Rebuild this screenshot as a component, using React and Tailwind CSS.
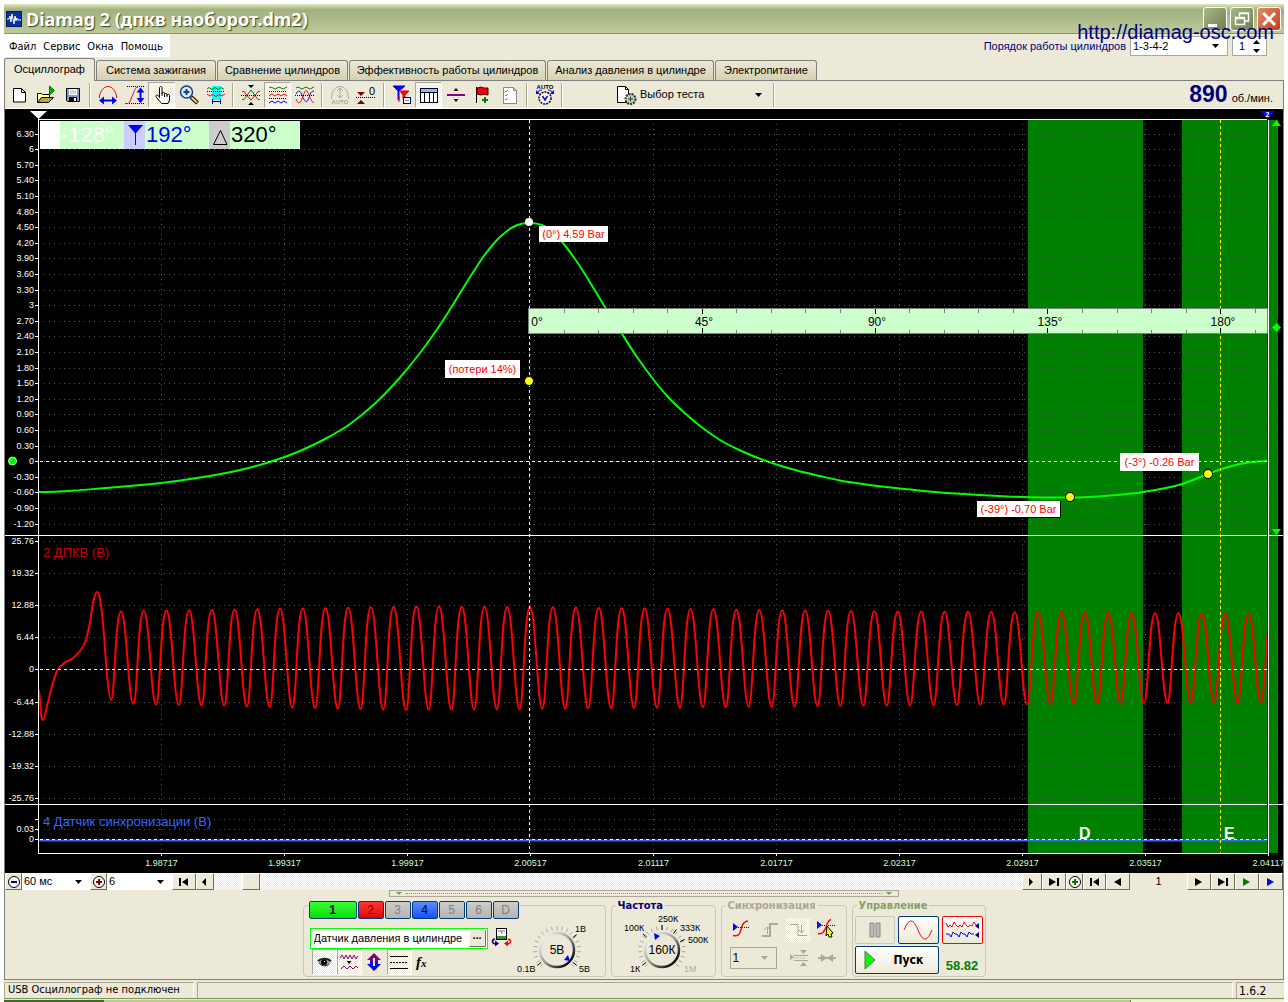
import React from "react";

const RAISED =
  "flex shrink-0 items-center justify-center border border-t-white border-l-white border-r-[#716f64] border-b-[#716f64] bg-[#ece9d8]";
const HATCH = "bg-[repeating-conic-gradient(#ffffff_0%_25%,#ece9d8_0%_50%)] bg-size-[2px_2px]";

/* ---------- toolbar glyphs, all on a 24 x 24 grid ---------- */
const RED = "#ff0000";
const BLUE = "#0000ff";
const GREEN = "#008000";

const GLYPHS = {
  file: (
    <path d="M6.500 5.500h8l4 4v9.500h-12z M14.500 5.500v4h4" fill="#fff" stroke="#000" />
  ),
  open: (
    <>
      <path d="M3.500 19.500v-9h4l1 1h7v3" fill="#ffff99" stroke="#000" />
      <path d="M3.500 19.500l4-5h12l-5 5z" fill="#b5a642" stroke="#000" />
      <path d="M15.500 3v9l5-4.500z" fill="#00b000" stroke="#008000" />
    </>
  ),
  save: (
    <>
      <path d="M5.500 5.500h13v13h-12l-1-1z" fill="#8a9cc4" stroke="#000" />
      <rect x="8" y="6" width="8" height="6" fill="#fff" />
      <rect x="8" y="14" width="8" height="4" fill="#000" />
      <rect x="13" y="15" width="2" height="3" fill="#fff" />
      <path d="M9 8h6M9 10h6" stroke="#aaa" />
    </>
  ),
  period: (
    <>
      <path d="M3.500 15v-2c1-5 4-9.500 8.500-9.500s7.500 4.500 8.500 9.500v2" fill="none" stroke={RED} />
      <path d="M6 17.500h12" stroke={BLUE} strokeWidth="2" />
      <path d="M3 17.500l5-4v8zM21 17.500l-5-4v8z" fill={BLUE} />
    </>
  ),
  amplitude: (
    <>
      <path d="M4 3.500h17M4 20.500h17" stroke="#000" strokeDasharray="1 1" />
      <path d="M2 20.500h3c3-2 3-6 5-9c1.500-4 2-7 5-7.500" fill="none" stroke={RED} />
      <path d="M17.500 6v13" stroke={BLUE} strokeWidth="2" />
      <path d="M17.500 4.500l4 5h-8zM17.500 20l4-5h-8z" fill={BLUE} />
    </>
  ),
  hand: (
    <path
      d="M9.500 14.500v-9.500c0-2 2.500-2 2.500 0v5.500c0-1.500 2.500-1.500 2.500 0v1c0-1.500 2.500-1.500 2.500 0v1c0-1.500 2.500-1.500 2.500 0v4.500l-1.500 3.500h-6.500l-5-6c-1.500-2 .5-3 2-2zM12 10v3M14.500 11v3M17 12v2"
      fill="#fff"
      stroke="#000"
    />
  ),
  zoom: (
    <>
      <path d="M14 14l6.500 6" stroke="#000" strokeWidth="4" />
      <path d="M14.500 14.500l5.500 5" stroke="#ffd75e" strokeWidth="2" />
      <circle cx="9.500" cy="9" r="6" fill="#d6ecff" stroke="#1d3b8c" strokeWidth="1.500" />
      <path d="M6.500 9h6M9.500 6v6" stroke="#1d3b8c" strokeWidth="2" />
    </>
  ),
  range: (
    <>
      <rect x="8" y="3" width="9" height="14" fill="#00ffff" />
      <path d="M3 6l2-1.500 3 2 3-2 3 2 3-2 3 2" fill="none" stroke={GREEN} />
      <path d="M3 8.500h18" stroke="#000" strokeDasharray="1 1" />
      <path d="M3 11l3 2 3-1.500 3 2 3-2 3 1.500 3-2" fill="none" stroke={RED} />
      <path d="M8.500 16v5M16.500 16v5M8 18.500h9" stroke="#000080" />
    </>
  ),
  autoscale: (
    <>
      <path d="M3 16.500h2l3-4 4-5.500 4 5.500 3 4h2" fill="none" stroke={GREEN} />
      <path d="M3 8.500h2l3 4 4 4.500 4-4.500 3-4h2" fill="none" stroke={RED} />
      <path d="M2 12.500h20" stroke="#000" strokeDasharray="1 1" />
      <path d="M9 2h6l-3 3zM9 22h6l-3-3z" fill="#000" />
    </>
  ),
  split: (
    <>
      <path d="M3 5l2-1 4 2 4-2 4 2 4-2" fill="none" stroke={GREEN} />
      <path d="M3 8.500h18M3 15.500h18" stroke="#000" strokeDasharray="1 1" />
      <path d="M3 13l3-2 3 2 3-2 3 2 3-2 3 2" fill="none" stroke={RED} />
      <path d="M3 20l3-2 3 2 3-2 3 2 3-2 3 2" fill="none" stroke={BLUE} />
    </>
  ),
  overlay: (
    <>
      <path d="M3 5l2-1 4 2 4-2 4 2 4-2" fill="none" stroke={GREEN} />
      <path d="M3 11c2-4 4-4 6 1s4 9 6 5 2-9 6-9" fill="none" stroke={BLUE} />
      <path d="M3 16c2 5 4 5 6 0s3-10 5-8 3 10 7 12" fill="none" stroke={RED} />
      <path d="M2 12.500h20" stroke="#000" strokeDasharray="1 1" />
    </>
  ),
  autoGray: (
    <>
      <path d="M3.500 16c0-7 3-12.500 8.500-12.500s8.500 5.500 8.500 12.500" fill="none" stroke="#aca899" />
      <path d="M12 5v10M9 8l3-3 3 3M9 12l3 3 3-3" fill="none" stroke="#aca899" />
      <text x="12" y="21" fontSize="6" fontWeight="bold" textAnchor="middle" fill="#aca899">AUTO</text>
    </>
  ),
  zero: (
    <>
      <path d="M2 9h8l-4 4zM2 21h8l-4-4z" fill="#800000" />
      <path d="M1 14.500h19" stroke="#000" strokeDasharray="1 1" />
      <text x="14" y="12" fontSize="11" fill="#000">0</text>
    </>
  ),
  filter: (
    <>
      <path d="M3 3h12l-6 5v9h-1V8z" fill={BLUE} stroke={BLUE} />
      <path d="M10 8h9l-4 4v4h-2v-4z" fill={RED} stroke={RED} />
      <path d="M9 13v6" stroke={RED} />
      <rect x="13.500" y="14.500" width="7" height="6" fill="#fff" stroke="#000080" />
      <path d="M15 17.500h4" stroke="#888" />
    </>
  ),
  table: (
    <>
      <rect x="3.500" y="5.500" width="17" height="14" fill="#fff" stroke="#000" />
      <rect x="4" y="6" width="16" height="3" fill="#8fb8ff" />
      <path d="M3 9.500h18M7.500 9v10M12.500 9v10M16.500 9v10" stroke="#000" />
    </>
  ),
  level: (
    <>
      <path d="M3 12h18" stroke="#800080" strokeWidth="2" />
      <path d="M9.500 8h5l-2.500-3zM9.500 16h5l-2.500 3z" fill="#000" />
    </>
  ),
  flag: (
    <>
      <path d="M5.500 4v16" stroke="#000" />
      <path d="M6 5l4-1 3 1 4 0v7l-4-1-3 1-4-1z" fill={RED} stroke="#400" />
      <path d="M11 17h6M14 14v6" stroke={GREEN} strokeWidth="2" />
    </>
  ),
  checklist: (
    <>
      <path d="M5.500 4.500h10l3 3v13h-13zM15.500 4.500v3h3" fill="#fff" stroke="#888" />
      <path d="M7 8l1 1 2-2M7 12l1 1 2-2M7 16l1 1 2-2" fill="none" stroke="#888" />
    </>
  ),
  autoDial: (
    <>
      <text x="12" y="6" fontSize="6" fontWeight="bold" textAnchor="middle" fill="#000">AUTO</text>
      <circle cx="12" cy="15" r="6" fill="#fff" stroke="#000" strokeWidth="1.500" strokeDasharray="2 1" />
      <path d="M9.500 13l2.500 4 2.500-4" fill="none" stroke={BLUE} strokeWidth="1.500" />
      <path d="M4 10c1-2 3-3 5-3M20 10c-1-2-3-3-5-3" fill="none" stroke={BLUE} />
      <path d="M3 7v4h4zM21 7v4h-4z" fill={BLUE} />
    </>
  ),
  test: (
    <>
      <path d="M3.500 3.500h8l3 3v13h-11zM11.500 3.500v3h3" fill="#fff" stroke="#000" />
      <circle cx="16.500" cy="16" r="5" fill="#b9d8b9" stroke="#333" strokeWidth="2" strokeDasharray="2 1" />
      <path d="M14 16h5M16.500 13.500v5" stroke="#333" />
    </>
  ),
  eye: (
    <>
      <path d="M6 12c3-4 10-4 13 0l-3 4c-3 1-6 0-10-4z" fill="#a89c90" />
      <path d="M6 11c3-3 9-3 13 0" fill="none" stroke="#222" strokeWidth="2" />
      <path d="M7 13c2 3 7 4 10 1" fill="none" stroke="#444" />
      <circle cx="12" cy="12.500" r="3" fill="#000" />
      <rect x="12" y="11" width="1" height="1" fill="#fff" />
    </>
  ),
  smooth: (
    <>
      <path d="M3 8l2-3 2 4 2-4 2 4 2-4 2 4 2-4 2 4 2-3" fill="none" stroke="#800080" />
      <path d="M9.500 11h5l-2.500 3z" fill="#000" />
      <path d="M4 19l3-3 3 3 3-3 3 3 3-3 2 2" fill="none" stroke="#800080" />
    </>
  ),
  vertical: (
    <>
      <path d="M12 3l7 7h-3v2H8v-2H5z" fill="#800080" />
      <path d="M12 21l7-7h-3v-2H8v2H5z" fill={BLUE} />
      <path d="M12 8v8" stroke="#ece9d8" strokeWidth="2" />
    </>
  ),
  lines: (
    <>
      <path d="M3 6.500h18M3 18.500h18" stroke="#000" />
      <path d="M3 12.500h18" stroke="#000" strokeDasharray="2 1" />
    </>
  ),
  fx: (
    <text x="4" y="17" fontSize="15" fontStyle="italic" fontWeight="bold" fontFamily="Liberation Serif, serif">
      f<tspan fontSize="11">x</tspan>
    </text>
  ),
  probe: (
    <>
      <rect x="6.500" y="2.500" width="10" height="11" fill="#fff" stroke="#000" />
      <rect x="7" y="10" width="9" height="3" fill="#3a8c3a" />
      <path d="M8 5h7M11 5l1 3" stroke="#777" />
      <path d="M5 13c-4 1-3 5 1 5" fill="none" stroke="#000080" strokeWidth="1.500" />
      <path d="M5 14.500v6l4-3z" fill="#000080" />
      <path d="M18 13c4 1 3 5-1 5" fill="none" stroke={RED} strokeWidth="1.500" />
      <path d="M18 14.500v6l-4-3z" fill={RED} />
    </>
  ),
  syncLevel: (
    <>
      <path d="M3 5v8l5-4z" fill={BLUE} />
      <path d="M8 9.500h12" stroke={BLUE} strokeDasharray="1 1" />
      <path d="M3 17.500c8 2 7-5 9-9 1-4 3-5 6-5.500" fill="none" stroke={RED} strokeWidth="1.500" />
    </>
  ),
  rise: (
    <g stroke="#aca899" fill="none">
      <path d="M4 18h8V6h8" strokeWidth="2" />
      <path d="M9.500 16V9M6 12l3.500-3 3 3" />
    </g>
  ),
  fall: (
    <g stroke="#aca899" fill="none">
      <path d="M4 6.500h8v11h9" />
      <path d="M15.500 7v8M13 12l2.500 3 2.500-3" />
    </g>
  ),
  syncPick: (
    <>
      <path d="M3 3v8l5-4z" fill={BLUE} />
      <path d="M8 7.500h13" stroke={BLUE} strokeDasharray="1 1" />
      <path d="M4 15.500c6 1 6-3 8-6 1-4 2-7 5-8" fill="none" stroke={RED} strokeWidth="1.500" />
      <path d="M13 8l6 7-2 1 1 3-3 0-1-3-2 2z" fill="#ffff00" stroke="#000" />
    </>
  ),
  spread: (
    <>
      <path d="M3 8v6l4-3zM13 4h7l-3.500 4zM13 20h7l-3.500-4z" fill="#aca899" />
      <path d="M7 9.500h14M7 14.500h14" stroke="#aca899" />
      <path d="M7 12h12" stroke="#aca899" strokeDasharray="1 1" />
    </>
  ),
  squeeze: (
    <>
      <path d="M3 12h18" stroke="#aca899" strokeWidth="2" />
      <path d="M6 8v8l6-4zM18 8v8l-6-4z" fill="#aca899" />
    </>
  ),
};

function Glyph({ name }) {
  return (
    <svg viewBox="0 0 24 24" className="size-6 shrink-0 font-['Liberation_Sans',sans-serif]" aria-hidden="true">
      {GLYPHS[name]}
    </svg>
  );
}

function ToolButton({ name, label, pressed, width = "w-[27px]" }) {
  return (
    <button
      type="button"
      aria-label={label}
      className={`flex h-[26px] shrink-0 items-center justify-center overflow-hidden ${width} ${
        pressed ? `border border-t-[#aca899] border-l-[#aca899] border-r-white border-b-white ${HATCH}` : ""
      }`}
    >
      <Glyph name={name} />
    </button>
  );
}

function Separator() {
  return (
    <div className="flex w-2 shrink-0 justify-center">
      <div className="h-6 w-0.5 border-r border-l border-l-[#aca899] border-r-white" />
    </div>
  );
}

const TOOL_GROUPS = [
  [["file", "Новый"], ["open", "Открыть"], ["save", "Сохранить"]],
  [["period", "Период"], ["amplitude", "Амплитуда"], ["hand", "Перемещение", true], ["zoom", "Увеличить"], ["range", "Диапазон"]],
  [["autoscale", "Масштаб"], ["split", "Раздельно", true], ["overlay", "Совместно"]],
  [["autoGray", "Авто"], ["zero", "Ноль"]],
  [["filter", "Фильтр"], ["table", "Таблица", true], ["level", "Уровень"], ["flag", "Метка"], ["checklist", "Список"]],
  [["autoDial", "Автонастройка"]],
];

/* ---------- small pieces ---------- */
function Picker({ label, value, className }) {
  return (
    <div className={`relative flex items-center ${className}`}>
      <select aria-label={label} className="h-full w-full appearance-none bg-transparent pl-0.5 outline-none" defaultValue={value}>
        <option>{value}</option>
      </select>
      <svg viewBox="0 0 7 4" className="pointer-events-none absolute right-2 h-1 w-[7px]" aria-hidden="true">
        <path d="M0 0h7l-3.500 4z" fill="currentColor" />
      </svg>
    </div>
  );
}

const ARROWS = {
  first: "M2 2h2v8h-2zM11 2v8l-6-4z",
  last: "M10 2h2v8h-2zM2 2v8l7-4z",
  prev: "M8 2v8l-4-4z",
  next: "M4 2v8l4-4z",
  prevWide: "M10 2v8l-7-4z",
  nextWide: "M3 2v8l7-4z",
};

function NavButton({ arrow, label, className }) {
  return (
    <button type="button" aria-label={label} className={`${RAISED} h-[17px] ${className}`}>
      <svg viewBox="0 0 14 12" className="h-3 w-[14px]" aria-hidden="true">
        <path d={ARROWS[arrow]} fill="currentColor" />
      </svg>
    </button>
  );
}

function RoundButton({ label, minus, className }) {
  return (
    <button type="button" aria-label={label} className={`${RAISED} h-[17px] w-[17px] ${className}`}>
      <svg viewBox="0 0 14 14" className="size-[14px]" aria-hidden="true">
        <circle cx="7" cy="7" r="5.500" fill="#fff" stroke="#000" />
        <path d={minus ? "M4 7h6" : "M4 7h6M7 4v6"} stroke="currentColor" strokeWidth="2" />
      </svg>
    </button>
  );
}

/* ---------- oscillogram ---------- */
const PRESSURE = [
  [39, 492], [75, 490.5], [100, 488.5], [130, 486], [161, 483], [200, 477.5], [240, 470], [273, 461], [300, 451],
  [324, 439.5], [350, 424], [375, 403.5], [400, 377.5], [420, 353], [442, 322], [472, 274], [485, 254.5],
  [500, 237], [514, 226.5], [529, 223], [545, 226.5], [563, 243], [575, 259],
  [605, 307], [622, 334], [637, 357], [653, 379], [668, 397], [687, 415], [702, 427.5], [720, 440],
  [737, 449], [753, 456], [778, 465], [797, 470.5], [820, 476], [840, 480.5], [870, 485], [900, 488.5], [940, 492.5],
  [980, 495], [1022, 497], [1070, 497.5], [1110, 495.5], [1143, 492], [1182, 484], [1208, 474],
  [1220, 469.5], [1240, 464], [1267, 461],
];
const START = [
  [39, 690], [41, 714], [43, 720], [47, 706], [52, 686], [57, 671], [63, 664], [73, 658],
  [80, 651], [86, 640], [90, 622], [93, 603], [97, 592], [101, 605], [104, 635], [107, 675], [111, 700],
];

/* Cubic Hermite curve whose tangents allow for uneven spacing of the samples. */
function smoothPath(points) {
  const slope = (a, b) => (b[1] - a[1]) / (b[0] - a[0]);
  const tangents = points.map((p, i) => {
    const a = points[i - 1];
    const c = points[i + 1];
    if (!a || !c) return 0;
    const s0 = slope(a, p);
    const s1 = slope(p, c);
    if (s0 * s1 <= 0) return 0;
    const h0 = p[0] - a[0];
    const h1 = c[0] - p[0];
    return (s0 * h1 + s1 * h0) / (h0 + h1);
  });
  let d = `M${points[0][0]} ${points[0][1]}`;
  for (let i = 0; i < points.length - 1; i++) {
    const b = points[i];
    const c = points[i + 1];
    const h = (c[0] - b[0]) / 3;
    d += `C${b[0] + h} ${b[1] + h * tangents[i]} ${c[0] - h} ${c[1] - h * tangents[i + 1]} ${c[0]} ${c[1]}`;
  }
  return d;
}

function mix(x, stops) {
  for (let i = 0; i < stops.length - 1; i++) {
    const [x0, y0] = stops[i];
    const [x1, y1] = stops[i + 1];
    if (x <= x1) return y0 + ((x - x0) / (x1 - x0)) * (y1 - y0);
  }
  return stops[stops.length - 1][1];
}

function crankPath() {
  const peaks = [];
  for (let i = 0; i < 18; i++) peaks.push(121 + 22.72 * i);
  for (let i = 0; i < 14; i++) peaks.push(530 + 22.93 * i);
  for (let i = 0; i < 19; i++) peaks.push(851 + 23.39 * i);
  const top = [[121, 611.5], [416, 606.5], [530, 607], [840, 611], [1280, 614]];
  const low = [[111, 700], [133, 704], [400, 710], [530, 709], [840, 706], [1280, 702]];
  let d = smoothPath(START);
  let trough = 111;
  for (const p of peaks) {
    const y = mix(p, top);
    d += `C${trough + 4} ${mix(trough, low)} ${p - 6} ${y} ${p} ${y}`;
    trough = p + 12.4;
    const yl = mix(trough, low);
    d += `C${p + 5.5} ${y} ${trough - 5} ${yl} ${trough} ${yl}`;
  }
  return d;
}

const P_LABELS = [
  "6.30", "6", "5.70", "5.40", "5.10", "4.80", "4.50", "4.20", "3.90", "3.60", "3.30", "3", "2.70", "2.40", "2.10",
  "1.80", "1.50", "1.20", "0.90", "0.60", "0.30", "0", "-0.30", "-0.60", "-0.90", "-1.20",
].map((t, i) => [t, Math.round(133.5 + i * 15.6)]);
const V_LABELS = ["25.76", "19.32", "12.88", "6.44", "0", "-6.44", "-12.88", "-19.32", "-25.76"].map((t, i) => [
  t,
  Math.round(541 + i * 32.1),
]);
const S_LABELS = [["", 819], ["0.03", 829], ["0", 839]];
const Y_LABELS = [...P_LABELS, ...V_LABELS, ...S_LABELS];
const T_LABELS = ["1.98717", "1.99317", "1.99917", "2.00517", "2.01117", "2.01717", "2.02317", "2.02917", "2.03517", "2.04117"];

function Tag({ x, y, w, h, text, shadow }) {
  return (
    <g>
      {shadow && <rect x={x} y={y} width={w + 1} height={h + 1} fill="#000" />}
      <rect x={x} y={y} width={w} height={h} fill="#fff" />
      <text x={x + w / 2} y={y + h / 2 + 4} textAnchor="middle" fontSize="11" fill="#ff0000">{text}</text>
    </g>
  );
}

function Oscillogram() {
  return (
    <svg
      viewBox="5 109 1278 764"
      className="block h-auto w-full bg-black font-['Liberation_Sans',Arial,sans-serif]"
      role="img"
      aria-label="Осциллограмма"
    >
      <g fill="#008000">
        <rect x="1028" y="120" width="115" height="733" />
        <rect x="1182" y="120" width="85" height="733" />
        <rect x="1269" y="120" width="9" height="733" />
      </g>
      <g stroke="#555555" strokeDasharray="1 4" shapeRendering="crispEdges">
        {Y_LABELS.map(([, y]) => (
          <path key={y} d={`M44 ${y + 0.5}H1266`} />
        ))}
        {T_LABELS.slice(0, 9).map((t, i) => (
          <path key={t} d={`M${161.5 + i * 123} 124V853`} />
        ))}
      </g>
      <g fontSize="9" fill="#fff">
        {Y_LABELS.map(([t, y]) => (
          <text key={y} x="34" y={y + 3} textAnchor="end">{t}</text>
        ))}
        {T_LABELS.map((t, i) => (
          <text key={t} x={161.5 + i * 123} y="866" textAnchor="middle" fill="#ccffcc">{t}</text>
        ))}
      </g>
      <g stroke="#fff" shapeRendering="crispEdges">
        {Y_LABELS.map(([, y]) => (
          <path key={y} d={`M35 ${y + 0.5}h4`} />
        ))}
        {T_LABELS.map((t, i) => (
          <path key={t} d={`M${161.5 + i * 123} 853v3`} />
        ))}
      </g>
      <path d={smoothPath(PRESSURE)} fill="none" stroke="#00ff00" strokeWidth="2" />
      <path d={crankPath()} fill="none" stroke="#ff0000" strokeWidth="2" clipPath="url(#plot)" />
      <clipPath id="plot">
        <rect x="38" y="540" width="1229" height="260" />
      </clipPath>
      <path d="M39 840.500H1267" stroke="#3366ff" strokeWidth="2" />
      <g stroke="#fff" strokeDasharray="3 3" shapeRendering="crispEdges">
        <path d="M40 461.500H1267M40 669.500H1267M40 839.500H1267" />
      </g>
      <path d="M529.500 120V853" stroke="#ffff66" strokeDasharray="3 3" shapeRendering="crispEdges" />
      <path d="M1220.500 120V853" stroke="#ffff00" strokeDasharray="3 3" shapeRendering="crispEdges" />
      <g stroke="#fff" shapeRendering="crispEdges">
        <path d="M38 119.500H1268M5 535.500H1283M5 804.500H1283M38 853.500H1268M38.500 119V854M1268.500 120V853" />
        <path d="M1267.500 119V853" stroke="#0000ff" />
      </g>

      <g shapeRendering="crispEdges">
        <rect x="528.500" y="308.500" width="739" height="25" fill="#ccffcc" stroke="#808080" />
        {Array.from({ length: 21 }, (_, i) => i + 1).map((i) => {
          const x = Math.round(529 + i * 34.56) + 0.5;
          return i % 5 === 0 ? (
            <path key={i} d={`M${x} 309v5M${x} 328v5`} stroke="#000" />
          ) : (
            <path key={i} d={`M${x} 309v4M${x} 330v3`} stroke="#808080" />
          );
        })}
      </g>
      <g fontSize="12" fill="#000" textAnchor="middle">
        <text x="537" y="326">0°</text>
        <text x="704" y="326">45°</text>
        <text x="877" y="326">90°</text>
        <text x="1050" y="326">135°</text>
        <text x="1223" y="326">180°</text>
      </g>

      <Tag x={539} y={226} w={69} h={16} text="(0°) 4.59 Bar" />
      <Tag x={445} y={360} w={75} h={18} text="(потери 14%)" />
      <Tag x={977} y={501} w={83} h={16} text="(-39°) -0.70 Bar" shadow />
      <Tag x={1120} y={453} w={79} h={18} text="(-3°) -0.26 Bar" />
      <circle cx="529" cy="222" r="4" fill="#fff" />
      <g fill="#ffff00" stroke="#000">
        <circle cx="529" cy="381" r="4.500" />
        <circle cx="1070" cy="497" r="4.500" />
        <circle cx="1208" cy="474" r="4.500" />
      </g>
      <circle cx="12.500" cy="461" r="4" fill="#00ff00" stroke="#b0ffb0" />

      <path d="M30 111h17l-8.500 8z" fill="#fff" />
      <path d="M1260 111h15l-7.500 8z" fill="#0000ff" />
      <text x="1267.500" y="117" fontSize="7" fontWeight="bold" textAnchor="middle" fill="#fff">2</text>
      <g fill="#00ff00">
        <path d="M1272 126h9l-4.500-6zM1272 529h9l-4.500 6zM1276.500 323l4.500 4.500-4.500 4.500-4.500-4.500z" />
      </g>

      <rect x="40" y="121" width="260" height="28" fill="#ccffcc" />
      <rect x="40" y="121" width="20" height="28" fill="#fff" />
      <rect x="124" y="121" width="21" height="28" fill="#ccccff" />
      <rect x="209" y="121" width="21" height="28" fill="#cccccc" />
      <path d="M128 125h15l-7 8v12h-1v-12z" fill="#0000ff" />
      <path d="M220.500 130.500l6.500 14h-13.500z" fill="none" stroke="#000" />
      <g fontSize="22">
        <text x="61" y="142" fill="#fff">-128°</text>
        <text x="146" y="142" fill="#0000ff">192°</text>
        <text x="231" y="142" fill="#000">320°</text>
      </g>
      <g fontSize="13">
        <text x="43" y="557" fill="#cc0000">2 ДПКВ (В)</text>
        <text x="43" y="826" fill="#3366ff">4 Датчик синхронизации (В)</text>
      </g>
      <g fontSize="16" fontWeight="bold" fill="#fff">
        <text x="1079" y="839">D</text>
        <text x="1224" y="839">E</text>
      </g>
    </svg>
  );
}

/* ---------- knobs ---------- */
function Knob({ value, marks, pointer, active }) {
  const ticks = Array.from({ length: 21 }, (_, i) => 135 + i * 13.5);
  return (
    <svg viewBox="0 0 100 66" className="h-[66px] w-[100px] shrink-0 font-['Liberation_Sans',Arial,sans-serif]" role="img" aria-label={value}>
      <defs>
        <linearGradient id={`ring-${value}`} x1="0.100" y1="0.100" x2="0.900" y2="0.900">
          <stop offset="0" stopColor="#f4f4f4" />
          <stop offset="0.500" stopColor="#999" />
          <stop offset="1" stopColor="#000" />
        </linearGradient>
      </defs>
      <g stroke="#aca899">
        {ticks.map((a) => {
          const r = (a * Math.PI) / 180;
          return (
            <path key={a} d={`M${50 + 20 * Math.cos(r)} ${40 + 20 * Math.sin(r)}L${50 + 24 * Math.cos(r)} ${40 + 24 * Math.sin(r)}`} />
          );
        })}
      </g>
      <g stroke="#000">
        {active.map((a) => {
          const r = (a * Math.PI) / 180;
          return (
            <path key={a} d={`M${50 + 20 * Math.cos(r)} ${40 + 20 * Math.sin(r)}L${50 + 25 * Math.cos(r)} ${40 + 25 * Math.sin(r)}`} />
          );
        })}
      </g>
      <circle cx="50" cy="40" r="17" fill="#ece9d8" stroke={`url(#ring-${value})`} strokeWidth="2.500" />
      <path d={pointer} fill={BLUE} />
      <text x="50" y="44" fontSize="12" textAnchor="middle">{value}</text>
      <g fontSize="9">
        {marks.map(([t, x, y, dim]) => (
          <text key={t} x={x} y={y} fill={dim ? "#aca899" : "#000"}>{t}</text>
        ))}
      </g>
    </svg>
  );
}

const CHANNELS = [
  ["1", "w-12 bg-linear-to-b from-[#33ff33] to-[#00dd00] font-bold text-black"],
  ["2", "w-[26px] bg-linear-to-b from-[#ff3333] to-[#dd0000] text-[#800000]"],
  ["3", "w-[26px] bg-linear-to-b from-[#cccccc] to-[#b4b4b4] text-[#808080]"],
  ["4", "w-[26px] bg-linear-to-b from-[#5c8cff] to-[#1a4cff] text-black"],
  ["5", "w-[26px] bg-linear-to-b from-[#cccccc] to-[#b4b4b4] text-[#808080]"],
  ["6", "w-[26px] bg-linear-to-b from-[#cccccc] to-[#b4b4b4] text-[#808080]"],
  ["D", "w-[26px] bg-linear-to-b from-[#cccccc] to-[#b4b4b4] text-[#808080]"],
];

function Group({ title, titleClass, className, children }) {
  return (
    <section className={`relative h-[72px] shrink-0 rounded-[4px] border border-[#cbc7b8] ${className}`}>
      {title && (
        <h2 className={`absolute -top-2 left-1 bg-[#ece9d8] px-0.5 text-[11px]/4 font-bold font-['DejaVu_Sans_Condensed','DejaVu_Sans',sans-serif] ${titleClass}`}>{title}</h2>
      )}
      {children}
    </section>
  );
}

const TABS = [
  ["Осциллограф", "w-[91px]"],
  ["Система зажигания", "w-[120px]"],
  ["Сравнение цилиндров", "w-[131px]"],
  ["Эффективность работы цилиндров", "w-[197px]"],
  ["Анализ давления в цилиндре", "w-[167px]"],
  ["Электропитание", "w-[102px]"],
];

const XP_BUTTON = "flex items-center justify-center rounded-[2px] border";

export default function App() {
  return (
    <div className="flex min-h-[1002px] w-full flex-col bg-white px-1 pt-1 font-['Liberation_Sans',Arial,sans-serif] text-[11px] text-black">
      <header className="flex h-[30px] items-center border-b border-[#8a9868] bg-linear-to-b from-[#dfe8bd] via-[#a1b07e] via-20% to-[#bccb98] pr-[3px] pl-0.5">
        <svg viewBox="0 0 16 16" className="mr-1 size-4" aria-hidden="true">
          <rect width="16" height="16" fill="#0a2fa0" />
          <rect x="0.500" y="0.500" width="15" height="15" fill="none" stroke="#001a66" />
          <path d="M1 8h2l1-3 1 6 1-8 2 10 1-8 1 5 1-3 1 2h3" fill="none" stroke="#fff" />
        </svg>
        <h1 className="flex-1 font-['Noto_Sans',sans-serif] text-[18px]/7 font-bold text-white [text-shadow:1px_1px_1px_#3a4420]">
          Diamag 2 (дпкв наоборот.dm2)
        </h1>
        <div className="flex gap-[3px]">
          <button type="button" aria-label="Свернуть" className="size-6 rounded-[3px] border border-white bg-linear-to-br from-[#a9b78a] to-[#6e7f4c]">
            <svg viewBox="0 0 22 22" aria-hidden="true"><path d="M4 16h9v3H4z" fill="#fff" /></svg>
          </button>
          <button type="button" aria-label="Развернуть" className="size-6 rounded-[3px] border border-white bg-linear-to-br from-[#a9b78a] to-[#6e7f4c]">
            <svg viewBox="0 0 22 22" aria-hidden="true"><path d="M8.500 9V5h9v8h-4M8 5.500h10M4.500 9.500h9v7h-9zM4 10.500h10" fill="none" stroke="#fff" strokeWidth="1.500" /></svg>
          </button>
          <button type="button" aria-label="Закрыть" className="size-6 rounded-[3px] border border-white bg-linear-to-br from-[#e08a6c] to-[#c43c14]">
            <svg viewBox="0 0 22 22" aria-hidden="true"><path d="M5 5l12 12M17 5l-12 12" stroke="#fff" strokeWidth="3" /></svg>
          </button>
        </div>
      </header>

      <div className="relative flex h-6 items-start justify-between bg-[#ece9d8]">
        <nav className="flex h-[23px] w-[166px] items-center gap-[7px] bg-white pt-1 pl-[5px] font-['DejaVu_Sans_Condensed','DejaVu_Sans',sans-serif]">
          {["Файл", "Сервис", "Окна", "Помощь"].map((t) => (
            <button type="button" key={t}>{t}</button>
          ))}
        </nav>
        <div className="flex items-center pt-0.5 pr-[17px]">
          <label htmlFor="order" className="mr-1 text-[#000080]">Порядок работы цилиндров</label>
          <div className="relative mr-1 flex h-5 w-[98px] items-center border border-[#aca899] bg-white">
            <select id="order" className="h-full w-full appearance-none pl-0.5 outline-none" defaultValue="1-3-4-2">
              <option>1-3-4-2</option>
            </select>
            <svg viewBox="0 0 7 4" className="pointer-events-none absolute right-2 h-1 w-[7px]" aria-hidden="true"><path d="M0 0h7l-3.500 4z" /></svg>
          </div>
          <div className="flex h-5 w-[35px] items-center border border-[#aca899] bg-white pr-1.5">
            <input aria-label="Цилиндр" defaultValue="1" className="w-full min-w-0 pl-1.5 outline-none" />
            <svg viewBox="0 0 7 13" className="h-[13px] w-[7px] shrink-0" aria-hidden="true"><path d="M0 4h7l-3.500-4zM0 9h7l-3.500 4z" /></svg>
          </div>
        </div>
        <a href="#site" className="absolute -top-[14px] right-2.5 text-[20px]/6 text-[#000080]">http://diamag-osc.com</a>
      </div>

      <div role="tablist" className="flex h-[23px] items-end gap-px border-b border-[#808080] bg-[#ece9d8]">
        {TABS.map(([t, w], i) => (
          <button
            type="button"
            role="tab"
            key={t}
            aria-selected={i === 0}
            className={
              i === 0
                ? `-mb-px h-[23px] rounded-t-[3px] border border-b-0 border-[#808080] bg-[#ece9d8] pb-0.5 whitespace-nowrap ${w}`
                : `h-5 rounded-t-[3px] border border-b-0 border-[#808080] bg-linear-to-b from-[#ece9d8] to-[#d6d0b0] whitespace-nowrap ${w}`
            }
          >
            {t}
          </button>
        ))}
      </div>

      <div className="flex-1 border-r border-b border-l border-[#808080] bg-[#ece9d8]">
        <div className="flex h-7 items-center border-b border-white">
          {TOOL_GROUPS.map((g, i) => (
            <React.Fragment key={i}>
              {g.map(([name, label, pressed]) => (
                <ToolButton key={name} name={name} label={label} pressed={pressed} />
              ))}
              <Separator />
            </React.Fragment>
          ))}
          <div className="ml-12 flex items-center">
            <Glyph name="test" />
            <Picker label="Тест" value="Выбор теста" className="h-5 w-[132px]" />
          </div>
          <Separator />
          <div className="ml-auto flex items-baseline gap-1 pr-2.5 text-[#000080]">
            <span className="text-[23px]/6 font-bold">890</span>
            <span className="text-black">об./мин.</span>
          </div>
        </div>

        <Oscillogram />

        <div className="flex h-[17px] items-center">
          <RoundButton label="Уменьшить" minus className="text-[#000080]" />
          <Picker label="Развёртка" value="60  мс" className="h-[17px] w-[68px] bg-white [&>select]:whitespace-pre" />
          <RoundButton label="Увеличить" className="text-[#800000]" />
          <Picker label="Число" value="6" className="h-[17px] w-[65px] bg-white" />
          <NavButton arrow="first" label="В начало" className="w-6" />
          <NavButton arrow="prev" label="Назад" className="w-[18px]" />
          <input
            type="range"
            aria-label="Позиция"
            min="0"
            max="1000"
            defaultValue="35"
            className={`h-[17px] min-w-0 flex-1 appearance-none ${HATCH} [&::-webkit-slider-thumb]:h-[17px] [&::-webkit-slider-thumb]:w-[18px] [&::-webkit-slider-thumb]:appearance-none [&::-webkit-slider-thumb]:border [&::-webkit-slider-thumb]:border-t-white [&::-webkit-slider-thumb]:border-l-white [&::-webkit-slider-thumb]:border-r-[#716f64] [&::-webkit-slider-thumb]:border-b-[#716f64] [&::-webkit-slider-thumb]:bg-[#ece9d8]`}
          />
          <NavButton arrow="next" label="Вперёд" className="w-5" />
          <NavButton arrow="last" label="В конец" className="w-6" />
          <RoundButton label="Добавить кадр" className="text-[#008000]" />
          <NavButton arrow="first" label="Первый кадр" className="w-[23px]" />
          <NavButton arrow="prevWide" label="Предыдущий кадр" className="w-6" />
          <span className="w-[57px] text-center">1</span>
          <NavButton arrow="nextWide" label="Следующий кадр" className="w-6" />
          <NavButton arrow="last" label="Последний кадр" className="w-6" />
          <NavButton arrow="nextWide" label="Пуск кадров" className="w-6 text-[#008000]" />
          <NavButton arrow="nextWide" label="Повтор" className="w-6 text-[#0000ff]" />
        </div>

        <div className="mx-auto flex h-[7px] w-[510px] items-center gap-1 border border-[#aca899] px-1.5 text-[#7f9660]">
          <svg viewBox="0 0 6 3" className="h-[3px] w-1.5" aria-hidden="true"><path d="M0 0h6l-3 3z" fill="currentColor" /></svg>
          <div className="h-px flex-1 border-t border-dotted border-[#8a9868]" />
          <svg viewBox="0 0 6 3" className="h-[3px] w-1.5" aria-hidden="true"><path d="M0 0h6l-3 3z" fill="currentColor" /></svg>
        </div>

        <div className="flex justify-center gap-[5px] pt-2 pb-0.5">
          <Group className="w-[303px]">
            <div className="flex">
              <div className="flex w-[203px] shrink-0 flex-col pl-[5px]">
                <div className="-mt-[5px] flex gap-px bg-[#ece9d8]">
                  {CHANNELS.map(([t, c]) => (
                    <button type="button" key={t} className={`h-[18px] shrink-0 rounded-[2px] border border-[#003c74] text-[12px]/4 ${c}`}>{t}</button>
                  ))}
                </div>
                <div className="mt-[7px] flex items-center gap-0.5 pl-px">
                  <div className="flex h-[21px] w-[178px] shrink-0 items-center border border-[#00ff00] bg-white p-px">
                    <input aria-label="Датчик" defaultValue="Датчик давления в цилиндре" className="w-full min-w-0 pl-0.5 outline-none" />
                    <button type="button" aria-label="Выбрать датчик" className={`${RAISED} h-[17px] w-[17px] pb-1.5 text-[11px] font-bold`}>...</button>
                  </div>
                  <button type="button" aria-label="Щуп"><Glyph name="probe" /></button>
                </div>
                <div className="-mt-px flex pl-[3px]">
                  {[["eye", "Показать", true], ["smooth", "Сглаживание", true], ["vertical", "Сдвиг"], ["lines", "Линии", true], ["fx", "Функция"]].map(([n, l, p]) => (
                    <ToolButton key={n} name={n} label={l} pressed={p} width="w-[25px]" />
                  ))}
                </div>
              </div>
              <div className="mt-1">
                <Knob
                  value="5В"
                  pointer="M61 45l2 6-6-1z"
                  active={[-38, 38, 142]}
                  marks={[["1В", 68, 22], ["0.1В", 10, 62], ["5В", 72, 62]]}
                />
              </div>
            </div>
          </Group>
          <Group title="Частота" titleClass="text-[#000080]" className="w-[105px]">
            <div className="mt-1 flex">
              <Knob
                value="160К"
                pointer="M42 23l6 3-5 4z"
                active={[-140, -90, -55, -25, 142]}
                marks={[["100К", 12, 21], ["250К", 46, 12], ["333К", 68, 21], ["500К", 76, 33], ["1К", 18, 62], ["1М", 72, 62, true]]}
              />
            </div>
          </Group>
          <Group title="Синхронизация" titleClass="text-[#aca899]" className="w-[126px]">
            <div className="flex flex-col pt-3 pl-2">
              <div className="flex gap-1">
                <button type="button" aria-label="Уровень"><Glyph name="syncLevel" /></button>
                <button type="button" aria-label="Фронт"><Glyph name="rise" /></button>
                <button type="button" aria-label="Спад" className={HATCH}><Glyph name="fall" /></button>
                <button type="button" aria-label="Выбор уровня"><Glyph name="syncPick" /></button>
              </div>
              <div className="mt-1 flex items-center gap-1">
                <Picker label="Канал" value="1" className="mr-1.5 h-[22px] w-[47px] border border-[#aca899] text-[12px] [&>svg]:text-[#aca899]" />
                <button type="button" aria-label="Развести"><Glyph name="spread" /></button>
                <button type="button" aria-label="Свести"><Glyph name="squeeze" /></button>
              </div>
            </div>
          </Group>
          <Group title="Управление" titleClass="text-[#8a9f66]" className="w-[134px]">
            <div className="grid grid-cols-[40px_41px_41px] gap-x-[3px] gap-y-0.5 pt-2.5 pl-0.5">
              <button type="button" aria-label="Пауза" className={`${XP_BUTTON} h-7 border-[#c9c7ba] bg-[#ece9d8]`}>
                <svg viewBox="0 0 12 16" className="h-4 w-3" aria-hidden="true"><path d="M1 1h4v14H1zM7 1h4v14H7z" fill="#bbb" stroke="#888" /></svg>
              </button>
              <button type="button" aria-label="Синус" className={`${XP_BUTTON} h-7 border-[#003c74] bg-linear-to-b from-white to-[#ece9d8]`}>
                <svg viewBox="0 0 30 22" className="h-[22px] w-[30px]" aria-hidden="true"><path d="M1 11c5-12 9-12 14 0s9 12 14 0" fill="none" stroke={RED} /></svg>
              </button>
              <button type="button" aria-label="Запись" className={`${XP_BUTTON} h-7 border-[#ff0000] bg-linear-to-b from-white to-[#ece9d8]`}>
                <svg viewBox="0 0 34 22" className="h-[22px] w-[34px]" aria-hidden="true">
                  <path d="M1 4l2 4 2-2 2 2 2-5 2 3 2 2 2-2 2 2 2-5 2 3 2 2 2-2 2 1 2-4 2 3" fill="none" stroke={RED} />
                  <path d="M1 15h3l2 3 2-5 2 2h2l2 3 2-5 2 2h2l2 3 2-5 2 2h3" fill="none" stroke={BLUE} />
                  <path d="M34 4v6l-4-3zM34 13v6l-4-3z" fill="#000080" />
                </svg>
              </button>
              <button type="button" className={`${XP_BUTTON} col-span-2 h-7 justify-start border-[#003c74] bg-linear-to-b from-white to-[#ece9d8] pl-2`}>
                <svg viewBox="0 0 12 20" className="mr-[18px] h-5 w-3" aria-hidden="true"><path d="M1 1v18l10-9z" fill="#00ff00" stroke="#666" /></svg>
                <span className="font-['DejaVu_Sans_Condensed','DejaVu_Sans',sans-serif] text-[12px] font-bold">Пуск</span>
              </button>
              <span className="self-end text-center text-[13px]/4 font-bold text-[#008000]">58.82</span>
            </div>
          </Group>
        </div>
      </div>

      <footer className="flex h-[19px] gap-[3px] border-b border-[#7f9660] bg-[#ece9d8] pt-0.5 font-['DejaVu_Sans_Condensed','DejaVu_Sans',sans-serif]">
        <div className="flex w-[190px] items-center border-t border-r border-l border-t-[#aca899] border-r-white border-l-[#aca899] pl-[3px]">USB Осциллограф не подключен</div>
        <div className="flex-1 border-t border-r border-l border-t-[#aca899] border-r-white border-l-[#aca899]" />
        <div className="flex w-12 items-center border-t border-l border-t-[#aca899] border-l-[#aca899] pl-0.5 text-[12px]">1.6.2</div>
      </footer>
      <div className="flex h-1 border-t border-[#e4ecc4]">
        <div className="w-[100px] bg-[#3f6b2a]" />
        <div className="flex-1 bg-[#b9cc8c]" />
        <div className="w-[154px] border-l border-[#7f7a4a] bg-[#f3efcf]" />
      </div>
    </div>
  );
}
